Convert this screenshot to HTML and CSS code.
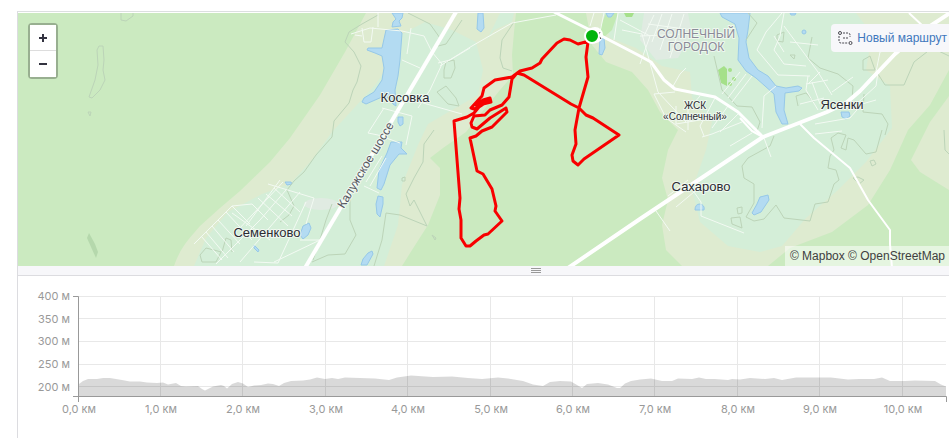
FILE: index.html
```html
<!DOCTYPE html>
<html lang="ru">
<head>
<meta charset="utf-8">
<title>Маршрут</title>
<link rel="stylesheet" href="styles.css">
</head>
<body>
<main class="panel">
  <section class="map" aria-label="Карта маршрута">
    <svg class="map-canvas" viewBox="18 13 931 253">
      <rect class="forest" x="18" y="13" width="931" height="253"/>

      <!-- open land -->
      <g class="meadow">
        <path d="M174 266C181 246 190 238 200 226L220 208L240 191L270 162L290 138L320 95L345 52L366 13H516L514 32L512 55L513 75L500 90L482 112L466 132L443 148L430 158L440 168L440 195L428 225L412 250L402 266Z"/>
        <path d="M586 13L592 45L606 62L632 72L648 90L660 112L678 130L668 150L662 178L668 200L662 225L666 250L682 266H768L790 248L832 232L868 205L890 170L908 130L930 105L949 70V13Z"/>
        <path d="M949 96L930 122L911 160L920 172L949 190Z"/>
      </g>

      <!-- settlements -->
      <g class="settlement">
        <path d="M194 266L206 238L228 212L262 194L290 184L312 160L332 132L356 106L376 84L392 60L402 34L425 22L452 30L476 42L483 70L478 95L452 110L428 124L418 145L402 185L398 225L384 266Z"/>
        <path d="M602 13H856L872 34L866 70L890 86L892 128L866 162L838 190L806 218L782 246L760 252L728 246L700 222L692 190L706 150L712 122L692 98L690 72L662 66L636 48L610 38Z"/>
        <path d="M500 13L486 42L494 30L512 22L514 13Z"/>
      </g>
      <g class="urban">
        <path d="M644 13H688L692 34L678 58L656 60L640 40Z"/>
        <ellipse cx="321" cy="204" rx="17" ry="6"/>
      </g>
      <g class="park">
        <path d="M606 13H618L612 30L603 38L600 28Z"/>
        <path class="bright" d="M718 70L724 66L727 69L727 86L721 83Z"/>
        <circle class="bright" cx="730" cy="70" r="2"/>
        <circle class="bright" cx="734" cy="79" r="2"/>
        <circle class="bright" cx="730" cy="84" r="2"/>
        <path class="bright" d="M624 13H634L632 17L626 17Z"/>
      </g>

      <!-- water -->
      <g class="water">
        <path d="M392 13H403L402 18L399 21L401 26L392 27L393 22L396 19Z"/>
        <path d="M386 30L398 29L402 33L400 60L398 76L395 90L396 106L393 104L389 98L382 97L366 104L362 102L364 98L374 92L382 80L384 68L382 56L375 53L367 50L368 48L382 48Z"/>
        <path d="M398 117L403 117L403 124L400 126L398 122Z"/>
        <path d="M391 142L402 142L401 148L407 154L399 154L390 165L384 184L381 190L377 188L379 170L387 153Z"/>
        <path d="M378 196L383 197L383 204L380 217L377 214L376 204Z"/>
        <path d="M368 253L372 251L373 254L367 265H361L363 259Z"/>
        <path d="M303 226L309 223L311 228L308 235L303 239L300 235Z"/>
        <path d="M285 182L291 182L292 184L287 185Z"/>
        <path d="M254 245L259 250L258 252L254 248Z"/>
        <path d="M478 13H483L484 28L481 32L477 29Z"/>
        <path d="M606 13H614L611 17H608Z"/>
        <path d="M600 38L604 38L605 48L602 55L599 54Z"/>
        <path d="M720 13H750L748 30L746 42L749 58L758 70L768 76L776 86L786 88L798 86L802 88L799 91L785 93L784 110L788 124L782 124L776 112L774 94L756 78L746 71L738 60L739 38L735 24L722 17Z"/>
        <circle cx="804" cy="32" r="2"/>
        <path d="M841 112L849 112L850 116L846 119L842 117Z"/>
        <path d="M760 197L768 195L769 200L761 212L754 215L752 213L757 204Z"/>
        <path d="M695 210Q695 204 700 204Q705 205 704 210Z"/>
        <path d="M790 13H796L795 15H791Z"/>
      </g>

      <!-- land contours -->
      <g class="contour">
        <path d="M121 13L121 20L126 21L133 16V13"/>
        <path d="M97 50L99 46L103 46L104 60L103 70L105 80L100 90L92 98L89 97L95 80L98 65Z"/>
        <path d="M88 112L91 112L90 116Z"/>
        <path class="filled" d="M89 233L95 244L98 252L96 258L91 247L87 238Z"/>
        <path d="M378 15L362 24L349 32L345 42L354 52L361 66L357 82L353 90L349 103L334 121L332 137L316 155L304 172L294 181L287 190L294 206L289 215L280 222"/>
        <path d="M408 13L430 24L440 38L438 46L446 44L462 20"/>
        <path d="M446 62L454 60L455 68L451 78L444 78L444 70ZM437 92L446 86L456 98L459 106L448 104Z"/>
        <path d="M434 130L424 144L423 162L414 178L406 194L410 206L414 200L427 226L400 215L386 213L382 240L374 266"/>
        <path d="M332 204L326 220L318 246L313 260M350 192L350 220L356 235L345 254L328 255L312 262"/>
        <path d="M402 178L405 177L405 181L402 181ZM432 235L436 238L435 240Z"/>
        <path d="M500 58L503 68L512 71M500 58L502 40L514 22"/>
        <path d="M748 13L757 23L746 40M777 35L784 32L783 42L777 41ZM790 55L795 55L794 59ZM812 37L808 58L820 68L838 74L853 86L852 100"/>
        <path d="M863 70L863 60L870 56L875 70ZM878 74L885 85L904 85L914 62L932 48L945 54L949 56"/>
        <path d="M714 56L722 90L737 106L752 107L760 122L756 134M774 136L770 146L748 158L742 166L744 178L754 184L754 203L746 217L754 221L764 219L776 205L784 218L810 221L815 204L828 202L834 184L839 180L836 170L828 168L830 156L834 150L831 138L838 133L846 135L841 148L846 150L848 138L854 140L866 154L876 152L882 130"/>
        <path d="M731 218L740 217L742 228L732 224ZM737 208L742 207L742 213L738 214ZM853 178L859 184L864 180L858 177ZM870 161L874 160L876 164L872 166Z"/>
        <path d="M798 106L796 96L806 93L814 102M864 94L863 112L882 114L888 124L885 135M944 130L945 150L949 154"/>
        <path d="M206 248L200 255L202 262L216 262L221 252L214 250ZM222 252L226 238L231 240L232 252"/>
      </g>

      <!-- minor streets -->
      <g class="street">
        <path d="M351 34L370 28L402 31L424 36L432 52L442 64L430 90L418 108M378 13V27M362 28L364 42L371 42L373 27M355 35L362 36M411 28L407 54M402 60L420 68M438 63L450 60L470 48M384 108L368 133L378 135M382 108L412 116L406 145M423 103L462 114M378 135L400 143"/>
        <path d="M194 244L232 206L252 204L268 220M201 236L222 260M206 232L228 258M212 226L234 252M218 220L240 244M226 212L252 240M232 206L250 224M238 230L283 182M246 226L280 180M216 264L260 220L286 190M240 262L300 192M254 262L278 263L306 202M232 213L270 240M258 198L288 226M266 194L292 216M274 188L300 212M268 184L314 198L306 224M300 240H320L274 262"/>
        <path d="M364 186L379 193M366 182L382 156M370 186L386 158"/>
        <path d="M440 66L472 46L512 23L556 15M594 13L590 26M604 13L600 32M618 13L614 40M620 20L650 36L640 64M640 36L690 34M654 15L644 36M662 14L652 42M672 14L660 50M684 14L670 58M648 24L692 30M622 30L642 34L658 92L686 122"/>
        <path d="M782 13L766 32L757 50L778 75L810 76M774 36L784 52M784 13L780 36L774 50L784 64L806 66M784 26L818 72L832 95M790 42L818 45M808 76L806 90L818 110M812 82L820 104M806 84L828 80M820 72L808 84M832 92L853 77M824 98L800 104"/>
        <path d="M740 72L722 94M746 74L728 98M752 76L732 102M776 86L764 96L762 128M852 98L876 72L880 52L894 48M878 72L876 86L852 108M815 124L850 118L862 104L876 100"/>
        <path d="M672 88L680 74L686 68M675 92L654 94L666 118L686 132M676 106L676 124L700 120M700 96L688 110L688 130M715 98L700 126L704 136M728 106L712 128M738 114L720 132"/>
        <path d="M764 138L771 157M752 133L730 146M742 122L712 134L702 137M815 134L842 131M656 211L670 231M676 207L694 192L701 202V216L744 233M668 196L688 180"/>
      </g>

      <!-- main roads -->
      <g class="road">
        <path class="highway" d="M456 12L305 268"/>
        <path class="avenue" d="M554 12L590 30L640 56L651 62L664 80L675 89L690 92L715 97L738 112L763 137"/>
        <path class="highway" d="M568 268L640 219L763 137L827 112L846 103L860 91L895 54L918 34L950 13"/>
        <path class="lane" d="M800 124L814 138L850 168L868 200L890 230L890 244L892 268M740 118L752 131L763 137M909 13L925 28"/>
      </g>

      <!-- place names -->
      <g class="place">
        <text x="405" y="102">Косовка</text>
        <text x="267" y="237">Семенково</text>
        <text x="701" y="191">Сахарово</text>
        <text x="842" y="109">Ясенки</text>
        <text class="hamlet" x="695" y="109">ЖСК</text>
        <text class="hamlet" x="695" y="120">«Солнечный»</text>
        <text class="district" x="696" y="38">СОЛНЕЧНЫЙ</text>
        <text class="district" x="696" y="51">ГОРОДОК</text>
        <text class="road-name" transform="translate(369 167) rotate(-59)">Калужское шоссе</text>
      </g>

      <!-- track -->
      <path class="track" d="M589 41L578 44L570 40L564 39L557 43L542 59L540 63L532 68L520 71L512 77L495 80L484 88L482 96L471 108L474 109L483 104L491 102L490 98L483 100L476 105L488 101L479 107L474 113L467 117L454 121L460 198L459 209L461 220L461 238L466 246L470 246L476 241L484 235L488 234L502 221L495 211L496 206L492 189L483 174L477 171L470 138L476 136L482 131L492 127L507 112L506 108L490 118L477 129L472 127L471 123L474 116L485 115L490 110L502 105L509 97L512 79L517 73L524 75L571 104L579 108L586 115L593 118L619 135L584 159L578 165L573 161L572 155L576 144L575 130L579 108L588 77L586 57L588 42"/>
      <circle class="finish" cx="595" cy="35" r="7"/>
      <path class="finish-check" d="M597 31L600 34M600 32L598 36M599 36L601 39"/>
      <circle class="start" cx="592" cy="36" r="7"/>
    </svg>

    <div class="zoom">
      <button type="button" aria-label="Приблизить"><svg viewBox="0 0 8 8"><path d="M0 4H8M4 0V8"/></svg></button>
      <button type="button" aria-label="Отдалить"><svg viewBox="0 0 8 8"><path d="M0 4H8"/></svg></button>
    </div>

    <a class="new-route" href="#">
      <svg viewBox="0 0 16 16"><circle cx="3" cy="3" r="1.5"/><circle cx="13.5" cy="13" r="1.5"/><path d="M6 3H11Q13 3 13 5V7M11 8H5M2 6V11Q2 13 4 13H11"/></svg>
      Новый маршрут
    </a>

    <div class="credits"><a href="#">© Mapbox</a> <a href="#">© OpenStreetMap</a></div>
  </section>

  <div class="splitter"><svg viewBox="0 0 10 6"><path d="M0 .5H10M0 2.5H10M0 4.5H10"/></svg></div>

  <section class="profile" aria-label="Профиль высоты">
    <svg class="chart" viewBox="18 276 931 150">
      <g class="grid">
        <path d="M78 296.500H946M78 318.500H946M78 341.500H946M78 364.500H946M78 386.500H946"/>
        <path d="M160.500 296V396M242.500 296V396M325.500 296V396M407.500 296V396M490.500 296V396M572.500 296V396M654.500 296V396M737.500 296V396M819.500 296V396M902.500 296V396"/>
      </g>
      <path class="area" d="M79 396V384L83 381L88 379L97 379L103 378L110 378L122 380L130 381.500H140L147 382.500L157 383L163 382.500L168 384.500L176 383L181 386L186 386.500L198 386L202 389L205 390.500L208 389L213 386.500L221 385L224 386L227 388.500L232 384L238 382L243 383.500L248 387L254 385.500L261 385L268 383.500L273 384L279 386L284 383L291 381L303 380.500L310 379.500L317 377.500L325 379L332 378L338 379L345 377.500L375 378.500L389 380L397 377.500L411 375.500L433 377L452 376.500L468 378L482 379L498 377.500L508 378.500L523 381L533 384.500L543 386L550 382L560 381L571 381.500L577 385L582 388L587 384L598 383L608 384.500L617 388H620L625 383.500L631 381L640 379.500L651 378.500L662 381H672L678 378.500L692 379L699 377.500L706 379H715L728 380L732 379L740 379.500L750 378L765 379L774 378L782 380L796 377.500H831L848 379.500L859 379H874L882 377.500L890 381H905L915 380.500L935 381L941 384.500L946 386.500V396Z"/>
      <path class="axis" d="M73 296.500H78.500V402M73 396.500H946.500V402"/>
      <g class="scale scale-y">
        <text x="70" y="300">400 м</text>
        <text x="70" y="323">350 м</text>
        <text x="70" y="345">300 м</text>
        <text x="70" y="368">250 м</text>
        <text x="70" y="391">200 м</text>
      </g>
      <g class="scale scale-x">
        <text x="79" y="413">0,0 км</text>
        <text x="161" y="413">1,0 км</text>
        <text x="243" y="413">2,0 км</text>
        <text x="326" y="413">3,0 км</text>
        <text x="408" y="413">4,0 км</text>
        <text x="491" y="413">5,0 км</text>
        <text x="573" y="413">6,0 км</text>
        <text x="655" y="413">7,0 км</text>
        <text x="738" y="413">8,0 км</text>
        <text x="820" y="413">9,0 км</text>
        <text x="903" y="413">10,0 км</text>
      </g>
    </svg>
  </section>
</main>
</body>
</html>
```
FILE: styles.css
```css
* { box-sizing: border-box; }

body {
  margin: 0;
  padding: 11px 0 0 17px;
  background: #fff;
  font-family: "Liberation Sans", Arial, sans-serif;
}

svg { display: block; }

.panel {
  min-height: calc(100vh - 11px);
  padding-top: 1px;
  border-top: 1px solid #dcdfe0;
  border-left: 1px solid #dcdce0;
}

.map {
  position: relative;
  overflow: hidden;
}

.map-canvas, .chart { width: 100%; height: auto; }

.forest { fill: #cbeac0; }
.meadow { fill: #deebd0; }
.settlement { fill: #d4eed8; }
.urban { fill: #e0ebe2; }
.park { fill: #c3eab4; }
.park .bright { fill: #a5e08a; }
.water { fill: #b3dbf2; stroke: #96c8e8; stroke-width: 1; }

.contour { fill: none; stroke: #bcd4b8; stroke-width: 1; stroke-linejoin: round; }
.contour .filled { fill: #b5d8ac; stroke: none; }

.street { fill: none; stroke: #f3faf3; stroke-width: 1; }
.road { fill: none; stroke: #fff; stroke-linejoin: round; }
.highway { stroke-width: 4; }
.avenue { stroke-width: 3; }
.lane { stroke-width: 2; }

.place {
  font-size: 13px;
  text-anchor: middle;
  fill: #2b2b33;
  stroke: #eff8ef;
  stroke-width: 2px;
  stroke-linejoin: round;
  paint-order: stroke;
}
.place .hamlet { font-size: 10px; }
.place .district { font-size: 12px; fill: #8b8b98; }
.place .road-name { font-size: 12px; fill: #55555f; }

.track {
  fill: none;
  stroke: #f80000;
  stroke-width: 3;
  stroke-linejoin: round;
  stroke-linecap: round;
}
.start { fill: #00b40c; stroke: #fff; stroke-width: 2; }
.finish { fill: #fff; stroke: #fff; stroke-width: 2; }
.finish-check { stroke: #333; stroke-width: 1; }

.zoom {
  position: absolute;
  top: 10px;
  left: 10px;
  border: 2px solid rgba(0, 0, 0, .25);
  border-radius: 4px;
  background-clip: padding-box;
}
.zoom button {
  display: flex;
  align-items: center;
  justify-content: center;
  width: 26px;
  height: 26px;
  padding: 0;
  border: 0;
  background: #fff;
}
.zoom button:first-child { border-bottom: 1px solid #ddd; }
.zoom svg { width: 8px; height: 8px; }
.zoom path { stroke: #333340; stroke-width: 2; }

.new-route {
  position: absolute;
  top: 11px;
  right: 0;
  display: flex;
  align-items: center;
  gap: 4px;
  height: 28px;
  padding: 0 2px 0 6px;
  border-radius: 4px 0 0 4px;
  background: #f7f7fa;
  color: #4177bd;
  font-size: 12px;
  text-decoration: none;
  white-space: nowrap;
}
.new-route svg {
  width: 16px;
  height: 16px;
  fill: none;
  stroke: #494950;
}
.new-route path { stroke-dasharray: 2 1; }

.credits {
  position: absolute;
  right: 0;
  bottom: 0;
  padding: 0 4px 0 5px;
  background: rgba(255, 255, 255, .5);
  font-size: 12px;
  line-height: 20px;
}
.credits a { color: #404040; text-decoration: none; }

.splitter {
  display: flex;
  align-items: center;
  justify-content: center;
  height: 10px;
  padding-left: 104px;
  border-bottom: 1px solid #dcdce0;
  background: #f7f7fa;
}
.splitter svg { width: 10px; height: 6px; }
.splitter path { stroke: #999; stroke-width: 1; }

.grid { fill: none; stroke: #e8e8e8; }
.area { fill: #000; fill-opacity: .15; }
.axis { fill: none; stroke: #999; }
.scale {
  font-family: Inter, "Liberation Sans", sans-serif;
  font-size: 11px;
  fill: #999;
}
.scale-y { text-anchor: end; }
.scale-x { text-anchor: middle; }
```
